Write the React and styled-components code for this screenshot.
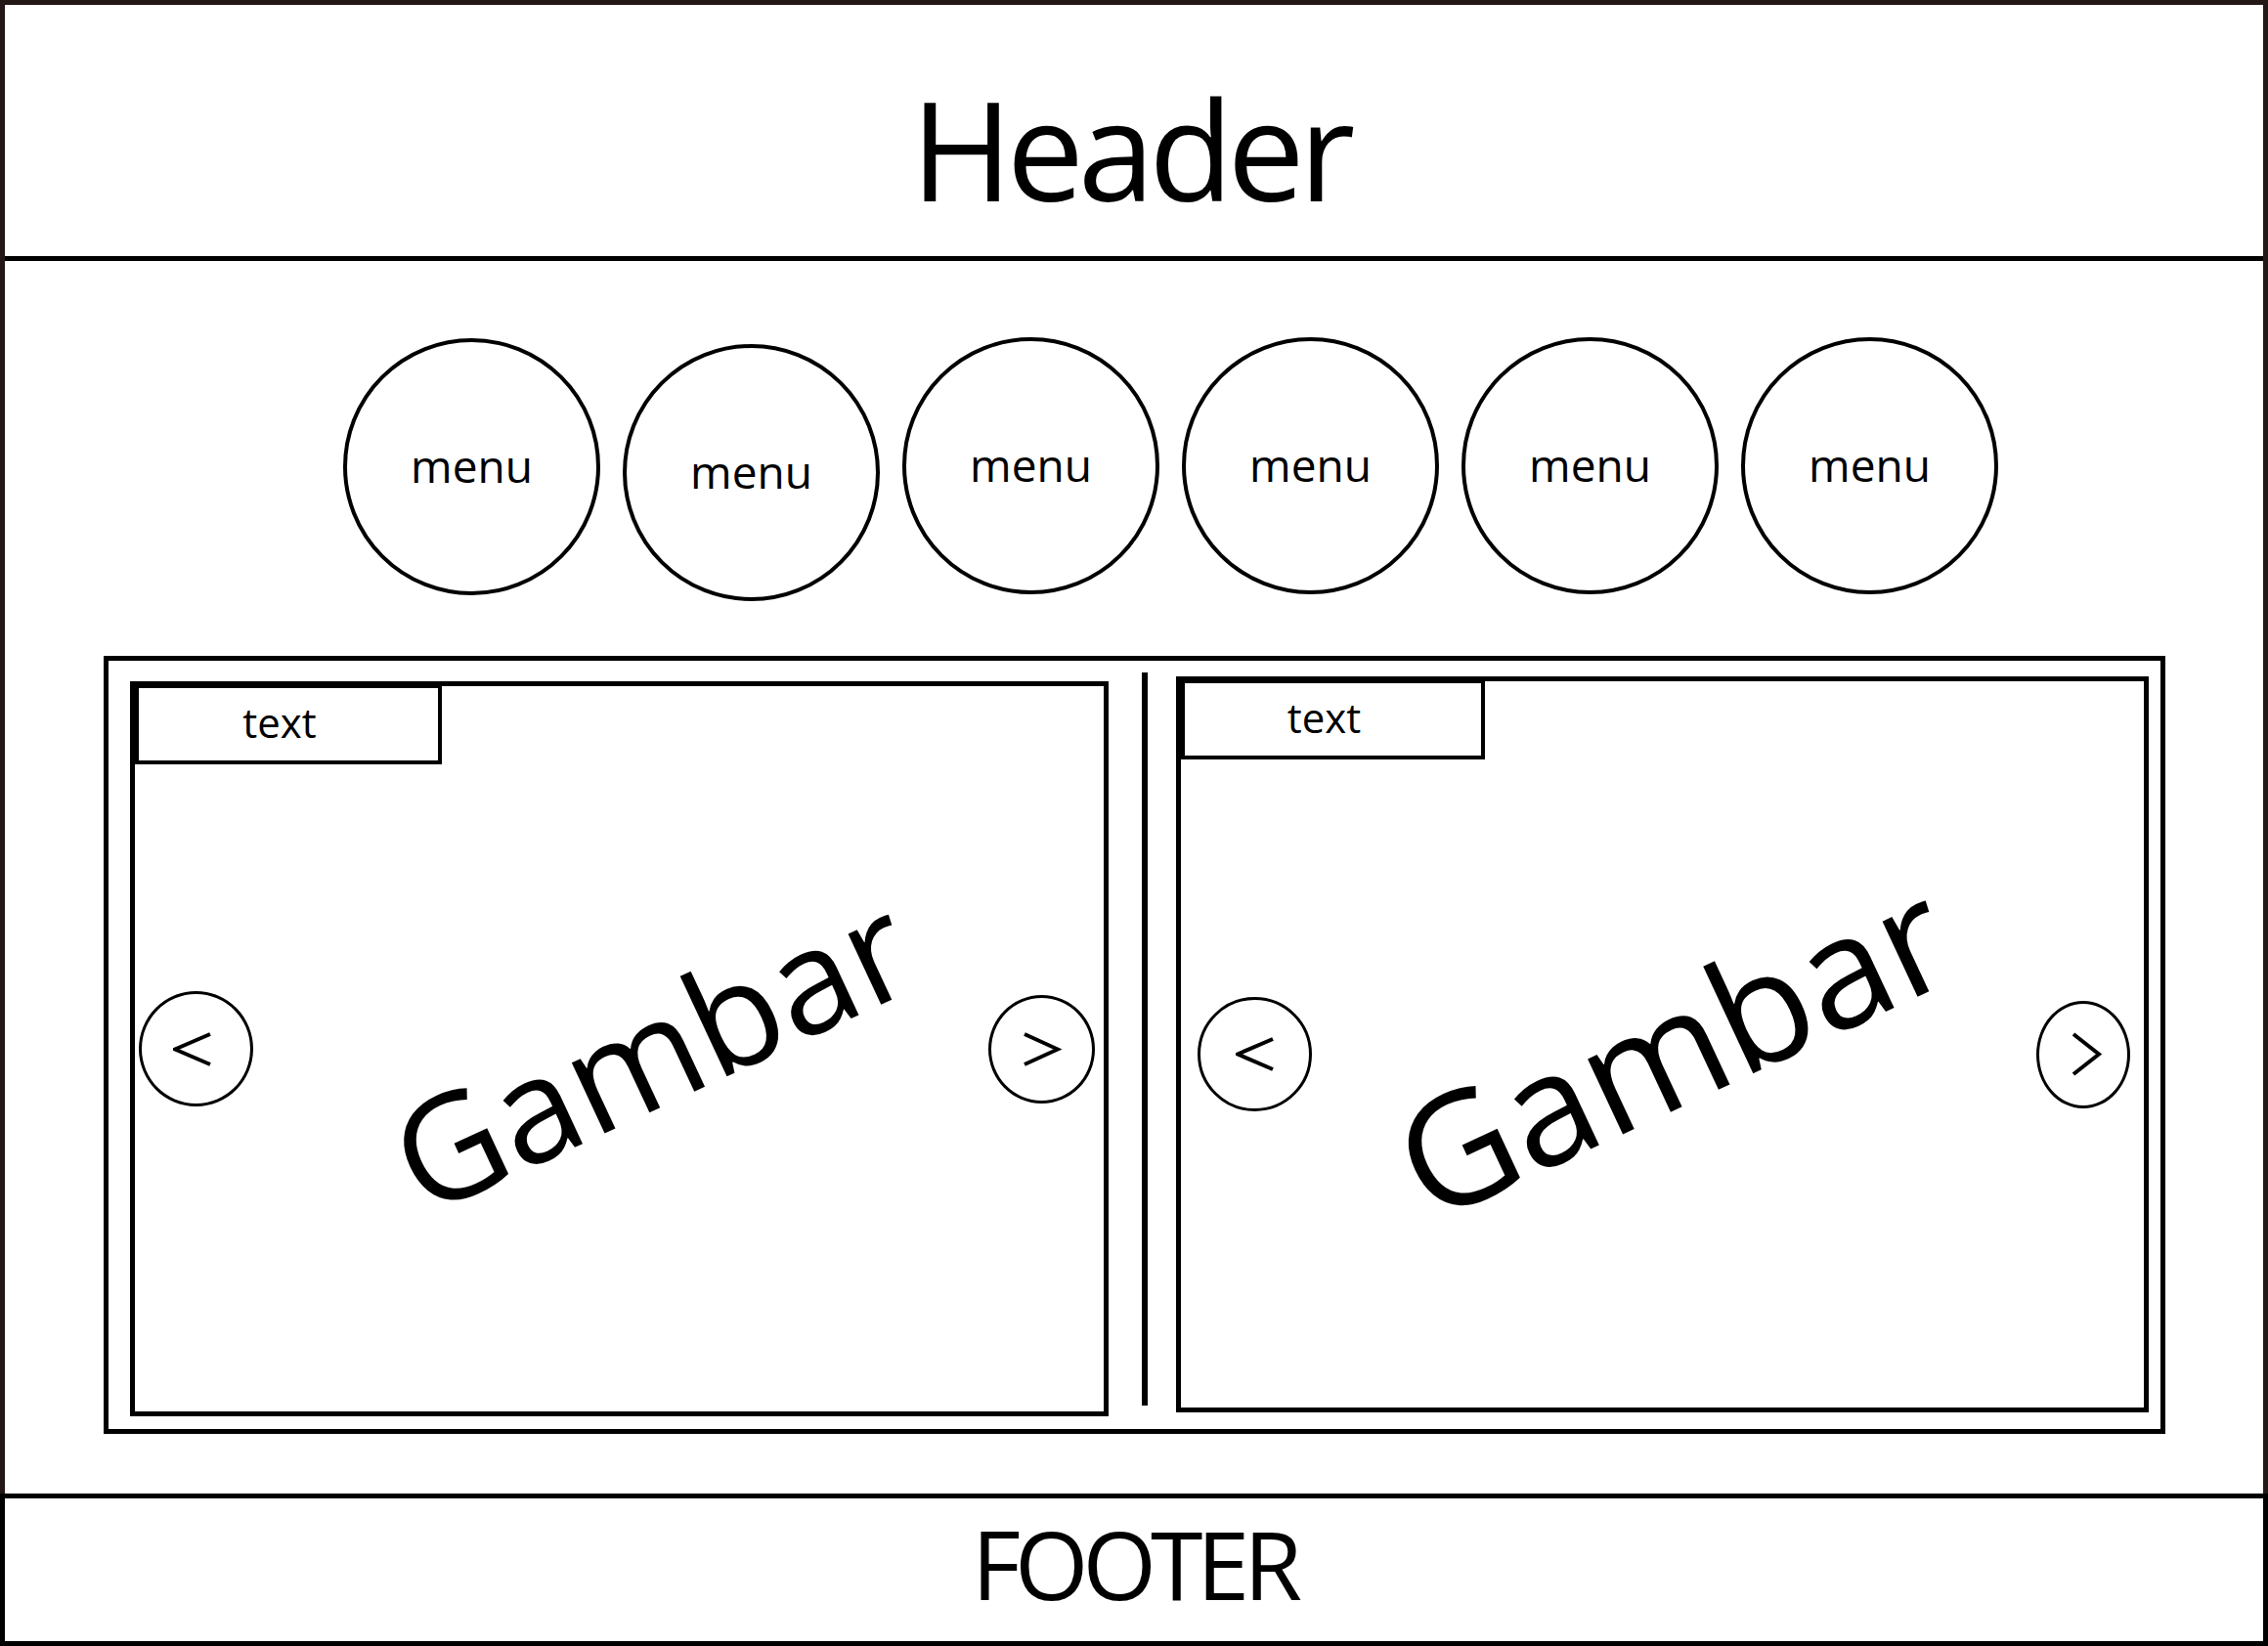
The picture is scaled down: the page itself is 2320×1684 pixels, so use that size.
import styled, { createGlobalStyle } from "styled-components";

const GlobalStyle = createGlobalStyle`
  html, body {
    margin: 0;
    padding: 0;
    background: #fff;
  }
  body {
    font-family: "Open Sans", "Noto Sans", sans-serif;
    color: #000;
  }
  *, *::before, *::after {
    box-sizing: border-box;
  }
`;

const Page = styled.div`
  width: 2320px;
  height: 1684px;
  display: flex;
  flex-direction: column;
  background: #fff;
`;

const Frame = styled.div`
  flex: 1;
  display: flex;
  flex-direction: column;
  border: 5px solid #231815;
  border-bottom: none;
`;

const Header = styled.header`
  height: 262px;
  flex-shrink: 0;
  display: flex;
  justify-content: center;
  align-items: flex-start;
  padding: 76px 8px 0 0;
  border-bottom: 5px solid #000;
  font-size: 141px;
  line-height: 1;
  letter-spacing: -6px;
`;

const Main = styled.main`
  flex: 1;
  display: flex;
  flex-direction: column;
  padding-top: 79px;
`;

const MenuRow = styled.nav`
  display: flex;
  gap: 23px;
  padding-left: 346px;
`;

const MenuItem = styled.div`
  width: 263px;
  height: 263px;
  margin-top: ${(p) => p.$dy}px;
  margin-bottom: ${(p) => -p.$dy}px;
  border: 4px solid #000;
  border-radius: 50%;
  display: flex;
  align-items: center;
  justify-content: center;
  font-size: 46px;
  line-height: 1;
  padding-bottom: 4px;
`;

const Content = styled.section`
  margin: 62px 0 0 101px;
  width: 2109px;
  height: 796px;
  border: 5px solid #000;
  display: flex;
  align-items: flex-start;
`;

const Panel = styled.div`
  position: relative;
  margin-left: ${(p) => p.$left}px;
  margin-top: ${(p) => p.$top}px;
  width: ${(p) => p.$width}px;
  height: ${(p) => p.$height}px;
  border: 5px solid #000;
  display: flex;
  align-items: center;
  padding: ${(p) => p.$padTop || 0}px ${(p) => p.$padRight}px 0
    ${(p) => p.$padLeft}px;
`;

const Divider = styled.div`
  margin-left: 34px;
  margin-top: 12px;
  width: 6px;
  height: 750px;
  background: #000;
`;

const Tab = styled.div`
  position: absolute;
  top: 0;
  left: 0;
  width: ${(p) => p.$width}px;
  height: 80px;
  border: 4px solid #000;
  border-top-width: 2px;
  display: flex;
  align-items: center;
  justify-content: center;
  padding: 0 18px 4px 0;
  font-size: 42px;
  line-height: 1;
  background: #fff;
`;

const ArrowButton = styled.button`
  flex-shrink: 0;
  width: ${(p) => p.$w}px;
  height: ${(p) => p.$h}px;
  border: 3px solid #000;
  border-radius: 50%;
  background: #fff;
  padding: 0;
  display: flex;
  align-items: center;
  justify-content: center;
`;

const Picture = styled.div`
  flex: 1;
  display: flex;
  justify-content: center;
  align-items: center;
  font-size: ${(p) => p.$size}px;
  line-height: 1;
  transform: translate(${(p) => p.$dx}px, ${(p) => p.$dy}px) rotate(-25deg);
  white-space: nowrap;
`;

const Footer = styled.footer`
  height: 156px;
  flex-shrink: 0;
  border: 5px solid #000;
  display: flex;
  align-items: center;
  justify-content: center;
  padding-bottom: 14px;
  font-size: 97px;
  line-height: 1;
  letter-spacing: -6px;
`;

function Chevron({ dir, w = 38, h = 35, shift = 0 }) {
  const pts =
    dir === "left"
      ? `${w},2 2,${h / 2} ${w},${h - 2}`
      : `2,2 ${w - 2},${h / 2} 2,${h - 2}`;
  return (
    <svg
      width={w + 2}
      height={h}
      viewBox={`0 0 ${w + 2} ${h}`}
      style={{ marginLeft: shift }}
    >
      <polyline points={pts} fill="none" stroke="#000" strokeWidth="4" />
    </svg>
  );
}

const menus = [
  { label: "menu", dy: 0 },
  { label: "menu", dy: 6 },
  { label: "menu", dy: -1 },
  { label: "menu", dy: -1 },
  { label: "menu", dy: -1 },
  { label: "menu", dy: -1 },
];

export default function App() {
  return (
    <>
      <GlobalStyle />
      <Page>
        <Frame>
          <Header>Header</Header>
          <Main>
            <MenuRow>
              {menus.map((m, i) => (
                <MenuItem key={i} $dy={m.dy}>
                  {m.label}
                </MenuItem>
              ))}
            </MenuRow>

            <Content>
              <Panel
                $left={22}
                $top={21}
                $width={1001}
                $height={752}
                $padLeft={4}
                $padRight={9}
              >
                <Tab $width={314}>text</Tab>
                <ArrowButton $w={117} $h={118}>
                  <Chevron dir="left" shift={-8} />
                </ArrowButton>
                <Picture $size={149} $dx={30} $dy={1}>
                  Gambar
                </Picture>
                <ArrowButton $w={109} $h={111}>
                  <Chevron dir="right" />
                </ArrowButton>
              </Panel>

              <Divider />

              <Panel
                $left={29}
                $top={16}
                $width={995}
                $height={753}
                $padLeft={17}
                $padRight={14}
                $padTop={20}
              >
                <Tab $width={311}>text</Tab>
                <ArrowButton $w={117} $h={117}>
                  <Chevron dir="left" />
                </ArrowButton>
                <Picture $size={159} $dx={-3} $dy={-9}>
                  Gambar
                </Picture>
                <ArrowButton $w={96} $h={110}>
                  <Chevron dir="right" w={30} h={45} shift={8} />
                </ArrowButton>
              </Panel>
            </Content>
          </Main>
        </Frame>
        <Footer>FOOTER</Footer>
      </Page>
    </>
  );
}
